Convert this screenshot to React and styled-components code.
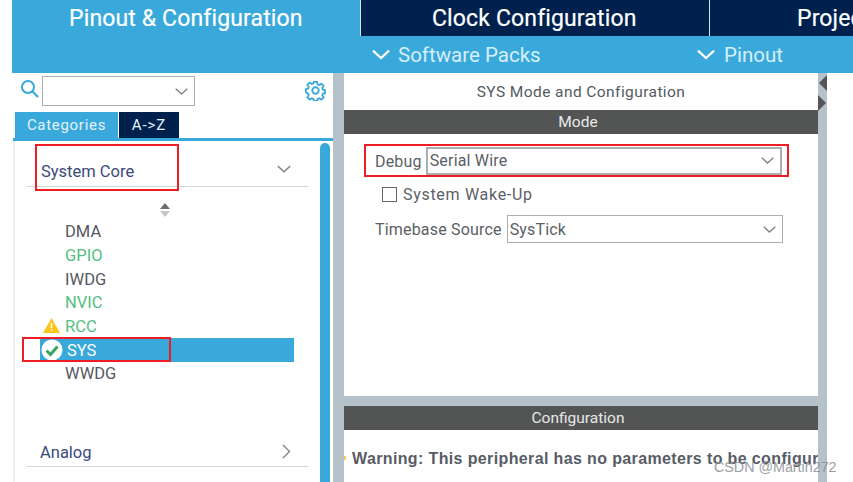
import React from "react";
import styled, { createGlobalStyle } from "styled-components";

const Global = createGlobalStyle`
  html, body { margin: 0; padding: 0; background: #fff; }
  body { font-family: "Liberation Sans", Arial, sans-serif; }
`;
const Page = styled.div`
  position: relative; width: 853px; height: 482px; overflow: hidden;
  padding-left: 12px; box-sizing: border-box; display: flex; flex-direction: column;
`;
const TabBar = styled.div`display: flex; height: 36px; background: #39a9dc; flex: none;`;
const MainTab = styled.div`
  flex: none; width: ${p => p.$w}px; box-sizing: border-box; height: 36px;
  background: ${p => (p.$active ? "#39a9dc" : "#00214d")};
  border-right: ${p => (p.$last ? "none" : "1px solid #d7e6ee")};
  color: #fff; font: 23px/38px Roboto, sans-serif; white-space: nowrap;
  padding-left: ${p => p.$pad}px; letter-spacing: .14px; -webkit-text-stroke: .2px #fff;
`;
const SubBar = styled.div`
  height: 37px; flex: none; background: #39a9dc; display: flex; align-items: center;
  color: #d6eef9; font: 20.5px Roboto, sans-serif; padding-left: 360px;
`;
const SubItem = styled.div`
  display: flex; align-items: center; gap: ${p => p.$gap}px; width: ${p => p.$w}px; flex: none;
`;
const Body = styled.div`flex: 1; display: flex; min-height: 0;`;
const Left = styled.div`width: 321px; flex: none; display: flex; flex-direction: column;`;
const SearchRow = styled.div`
  height: 39px; flex: none; display: flex; align-items: flex-start; padding: 3px 7px 0 8px; box-sizing: border-box;
`;
const Combo = styled.div`
  width: 153px; height: 30px; box-sizing: border-box; border: 1px solid #a9b0b4; margin-left: 3px;
  display: flex; align-items: center; justify-content: flex-end; padding-right: 6px;
`;
const GearWrap = styled.div`margin: 4px 0 0 auto; display: flex;`;
const Tabs = styled.div`display: flex; padding-left: 3px; height: 27px; flex: none; gap: 1px;`;
const SideTab = styled.div`
  height: 27px; box-sizing: border-box; width: ${p => p.$w}px; text-align: center;
  background: ${p => (p.$active ? "#39a9dc" : "#00214d")}; color: #e4f3fb;
  font: 15px/26px Roboto, sans-serif; letter-spacing: ${p => (p.$active ? 0.7 : 0.9)}px;
`;
const TabRule = styled.div`height: 3px; flex: none; margin-left: 1px; background: #39a9dc; margin-top: -1px;`;
const ListPanel = styled.div`
  flex: 1; display: flex; border-left: 2px solid #eef0f1; min-height: 0; margin-left: 1px;
`;
const ListMain = styled.div`width: 281px; margin-left: 12px; flex: none; display: flex; flex-direction: column;`;
const Category = styled.div`
  height: ${p => p.$h}px; box-sizing: border-box; flex: none; border-bottom: 1px solid #cfd6db;
  display: flex; align-items: flex-end; justify-content: space-between; color: #3a4a7a;
  font: 16.5px Roboto, sans-serif; padding: 0 17px ${p => p.$pb}px ${p => p.$pl}px; margin-top: ${p => p.$top || 0}px;
`;
const CategoryMark = styled.span`display: flex; margin-bottom: ${p => p.$b}px;`;
const Sort = styled.div`display: flex; justify-content: center; padding: 16px 0 0 0; margin-right: 5px; height: 14px;`;
const Items = styled.div`margin-top: 3px; margin-left: 13px;`;
const Item = styled.div`
  height: 23.7px; width: 254px; box-sizing: border-box; display: flex; align-items: center; position: relative;
  padding-left: ${p => (p.$sel ? 27 : 25)}px; font: 16.5px Roboto, sans-serif;
  color: ${p => (p.$sel ? "#fff" : p.$green ? "#52bf7f" : "#55585e")};
  background: ${p => (p.$sel ? "#39a9dc" : "transparent")};
`;
const ItemIcon = styled.span`position: absolute; left: ${p => p.$l}px; top: ${p => p.$t}px; display: flex;`;
const ScrollTrack = styled.div`
  flex: none; width: 10px; margin: 2px 0 0 12px; background: #39a9dc; border-radius: 5px 5px 0 0;
`;
const Gutter = styled.div`flex: none; width: 494px; margin-left: 0; background: #b5c2c9; display: flex; min-width: 0;`;
const Right = styled.div`
  width: 474px; margin-left: 11px; flex: none; display: flex; flex-direction: column;
`;
const ModePanel = styled.div`height: 323px; flex: none; background: #fff; display: flex; flex-direction: column;`;
const PanelTitle = styled.div`
  height: 37px; flex: none; box-sizing: border-box; text-align: center; color: #555a60; font: 15.5px/38px Roboto, sans-serif; letter-spacing: .42px;
`;
const DarkHeader = styled.div`
  height: 24px; flex: none; box-sizing: border-box; padding-right: 6px; background: #535554; color: #e8e8e8; text-align: center; font: 15.5px/24px Roboto, sans-serif;
`;
const FormRow = styled.div`
  display: flex; align-items: center; padding-left: ${p => p.$pl || 31}px; color: #5b6066; font: 16px Roboto, sans-serif;
  margin-top: ${p => p.$top}px; letter-spacing: ${p => p.$ls || 0.18}px;
`;
const Select = styled.div`
  width: ${p => p.$w}px; height: 28px; box-sizing: border-box; border: ${p => (p.$thick ? 2 : 1)}px solid #a9b0b4;
  display: flex; align-items: center; justify-content: space-between;
  padding: 0 6px ${p => (p.$thick ? 2 : 0)}px 2px; color: #5b6066; margin-left: ${p => p.$ml}px;
`;
const Check = styled.span`width: 15px; height: 15px; box-sizing: border-box; border: 1.5px solid #666; display: block; margin-left: 8px; margin-right: 6px;`;
const ConfigPanel = styled.div`margin-top: 10px; flex: 1; background: #fff;`;
const ConfigBody = styled.div`
  position: relative; color: #585c66; font: bold 16px/1 "Liberation Sans", sans-serif; white-space: nowrap; overflow: hidden;
  padding: 21px 0 0 8px; letter-spacing: .37px;
`;
const IconSliver = styled.span`
  position: absolute; left: 0; top: 26px; width: 2px; height: 4px; background: #f5cf5a;
`;
const Arrows = styled.div`
  width: 9px; flex: none; display: flex; flex-direction: column; gap: 4px; padding-top: 2px; align-items: center;
`;
const Outline = styled.div`
  position: absolute; left: ${p => p.$x}px; top: ${p => p.$y}px; width: ${p => p.$w}px; height: ${p => p.$h}px;
  border: 2px solid #ee1c25; box-sizing: border-box; pointer-events: none;
`;
const Watermark = styled.div`
  position: absolute; left: 714px; top: 459px; color: #8a8f93; font: 14.3px "Liberation Sans", sans-serif; opacity: .85; white-space: nowrap;
`;
const Chevron = ({ w = 13, h = 7, c = "#7d8387", sw = 1.4 }) => (
  <svg width={w} height={h} viewBox="0 0 13 7" fill="none">
    <path d="M.7.7 6.5 6 12.3.7" stroke={c} strokeWidth={sw} />
  </svg>
);

export default function App() {
  return (
    <Page>
      <Global />
      <TabBar>
        <MainTab $active $w={349} $pad={57}>Pinout &amp; Configuration</MainTab>
        <MainTab $w={349} $pad={71}>Clock Configuration</MainTab>
        <MainTab $w={143} $pad={87} $last>Project Manager</MainTab>
      </TabBar>
      <SubBar>
        <SubItem $w={325} $gap={8}><Chevron w={18} h={11} c="#fff" sw={1.6} />Software Packs</SubItem>
        <SubItem $w={120} $gap={9}><Chevron w={18} h={11} c="#fff" sw={1.6} />Pinout</SubItem>
      </SubBar>
      <Body>
        <Left>
          <SearchRow>
            <svg width="19" height="19" viewBox="0 0 19 19" fill="none" style={{ marginTop: 3 }}>
              <circle cx="8" cy="8" r="6" stroke="#39a9dc" strokeWidth="2" />
              <path d="M12.5 12.5 18 18" stroke="#39a9dc" strokeWidth="2.2" />
            </svg>
            <Combo><Chevron /></Combo>
            <GearWrap>
              <svg width="21" height="21" viewBox="0 0 22 22" fill="none" stroke="#39a9dc" strokeWidth="1.9">
                <circle cx="11" cy="11" r="3.4" />
                <path d="M9.3 2h3.4l.5 2.5 1.7.7 2.2-1.4 2.4 2.4-1.4 2.2.7 1.7 2.2.5v3.2l-2.2.5-.7 1.7 1.4 2.2-2.4 2.4-2.2-1.4-1.7.7-.5 2.1H9.3l-.5-2.1-1.7-.7-2.2 1.4-2.4-2.4 1.4-2.2-.7-1.7L1 12.8V9.6l2.2-.5.7-1.7-1.4-2.2 2.4-2.4 2.2 1.4 1.7-.7z" />
              </svg>
            </GearWrap>
          </SearchRow>
          <Tabs>
            <SideTab $active $w={103}>Categories</SideTab>
            <SideTab $w={60}>A-&gt;Z</SideTab>
          </Tabs>
          <TabRule />
          <ListPanel>
            <ListMain>
              <Category $h={46} $pb={5} $pl={14}>
                System Core
                <CategoryMark $b={8}><Chevron w={14} h={8} /></CategoryMark>
              </Category>
              <Sort>
                <svg width="10" height="14" viewBox="0 0 10 14">
                  <path d="M5 0 10 6H0z" fill="#6b6f72" />
                  <path d="M5 14 0 8h10z" fill="#c3c7c9" />
                </svg>
              </Sort>
              <Items>
                <Item>DMA</Item>
                <Item $green>GPIO</Item>
                <Item>IWDG</Item>
                <Item $green>NVIC</Item>
                <Item $green>
                  <ItemIcon $l={3} $t={3}>
                    <svg width="17" height="15" viewBox="0 0 17 15">
                      <path d="M8.5 0 17 15H0z" fill="#fcc419" />
                      <path d="M8.5 5v5M8.5 11.5v1.6" stroke="#fff" strokeWidth="1.5" />
                    </svg>
                  </ItemIcon>
                  RCC
                </Item>
                <Item $sel>
                  <ItemIcon $l={1} $t={1}>
                    <svg width="22" height="22" viewBox="0 0 22 22">
                      <circle cx="11" cy="11" r="10.5" fill="#fff" />
                      <path d="M5.5 11.5 9.5 15.5 16.5 7.5" fill="none" stroke="#3ba55d" strokeWidth="3" />
                    </svg>
                  </ItemIcon>
                  SYS
                </Item>
                <Item>WWDG</Item>
              </Items>
              <Category $h={37} $top={44} $pb={4} $pl={13}>
                Analog
                <CategoryMark $b={3}>
                  <svg width="9" height="15" viewBox="0 0 9 15" fill="none">
                    <path d="M1 1 7.5 7.5 1 14" stroke="#7d8387" strokeWidth="1.4" />
                  </svg>
                </CategoryMark>
              </Category>
            </ListMain>
            <ScrollTrack />
          </ListPanel>
        </Left>
        <Gutter>
          <Right>
            <ModePanel>
              <PanelTitle>SYS Mode and Configuration</PanelTitle>
              <DarkHeader>Mode</DarkHeader>
              <FormRow $top={13}>
                Debug
                <Select $w={356} $ml={4} $thick>Serial Wire<Chevron /></Select>
              </FormRow>
              <FormRow $top={10} $pl={30} $ls={0.7}>
                <Check />System Wake-Up
              </FormRow>
              <FormRow $top={11}>
                Timebase Source
                <Select $w={276} $ml={5}>SysTick<Chevron /></Select>
              </FormRow>
            </ModePanel>
            <ConfigPanel>
              <DarkHeader>Configuration</DarkHeader>
              <ConfigBody><IconSliver />Warning: This peripheral has no parameters to be configured</ConfigBody>
            </ConfigPanel>
          </Right>
          <Arrows>
            <svg width="9" height="16" viewBox="0 0 9 16"><path d="M9 0V16L1 8z" fill="#555" /></svg>
            <svg width="9" height="16" viewBox="0 0 9 16"><path d="M0 0V16L8 8z" fill="#555" /></svg>
          </Arrows>
        </Gutter>
      </Body>
      <Outline $x={35} $y={144} $w={144} $h={47} />
      <Outline $x={22} $y={337} $w={149} $h={25} />
      <Outline $x={364} $y={144} $w={425} $h={33} />
      <Watermark>CSDN @Martin272</Watermark>
    </Page>
  );
}
